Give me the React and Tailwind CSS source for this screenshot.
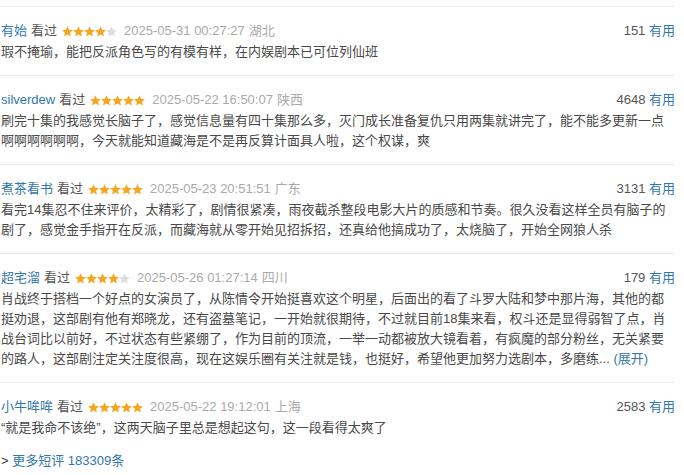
import React from "react";

const comments = [
  {
    name: "有始",
    stars: 4,
    time: "2025-05-31 00:27:27",
    region: "湖北",
    votes: 151,
    text: "瑕不掩瑜，能把反派角色写的有模有样，在内娱剧本已可位列仙班",
  },
  {
    name: "silverdew",
    stars: 5,
    time: "2025-05-22 16:50:07",
    region: "陕西",
    votes: 4648,
    text: "刷完十集的我感觉长脑子了，感觉信息量有四十集那么多，灭门成长准备复仇只用两集就讲完了，能不能多更新一点啊啊啊啊啊啊，今天就能知道藏海是不是再反算计面具人啦，这个权谋，爽",
  },
  {
    name: "煮茶看书",
    stars: 5,
    time: "2025-05-23 20:51:51",
    region: "广东",
    votes: 3131,
    text: "看完14集忍不住来评价，太精彩了，剧情很紧凑，雨夜截杀整段电影大片的质感和节奏。很久没看这样全员有脑子的剧了，感觉金手指开在反派，而藏海就从零开始见招拆招，还真给他搞成功了，太烧脑了，开始全网狼人杀",
  },
  {
    name: "超宅溜",
    stars: 4,
    time: "2025-05-26 01:27:14",
    region: "四川",
    votes: 179,
    text: "肖战终于搭档一个好点的女演员了，从陈情令开始挺喜欢这个明星，后面出的看了斗罗大陆和梦中那片海，其他的都挺劝退，这部剧有他有郑晓龙，还有盗墓笔记，一开始就很期待，不过就目前18集来看，权斗还是显得弱智了点，肖战台词比以前好，不过状态有些紧绷了，作为目前的顶流，一举一动都被放大镜看着，有疯魔的部分粉丝，无关紧要的路人，这部剧注定关注度很高，现在这娱乐圈有关注就是钱，也挺好，希望他更加努力选剧本，多磨练...",
    more: true,
  },
  {
    name: "小牛哞哞",
    stars: 5,
    time: "2025-05-22 19:12:01",
    region: "上海",
    votes: 2583,
    text: "“就是我命不该绝”，这两天脑子里总是想起这句，这一段看得太爽了",
  },
];

// star for the rating row, 11px each, no gap between them
function Star({ on }) {
  return (
    <svg width="11" height="11" viewBox="0 0 24 24" className="block">
      <path
        d="M12 0.5l3.5 7.6 8.3 0.9-6.2 5.6 1.8 8.2L12 18.6l-7.4 4.2 1.8-8.2L0.2 9l8.3-0.9z"
        fill={on ? "#f6a623" : "#dddddd"}
      />
    </svg>
  );
}

function Comment({ c }) {
  return (
    <div className="border-t border-[#eaeaea] pt-[14px] pb-[13px]">
      {/* header */}
      <div className="flex items-center h-5 leading-5 pl-[1px]">
        <span className="text-[#3377aa]">{c.name}</span>
        <span className="text-[#555] ml-[4px]">看过</span>
        <span className="flex ml-[5px]">
          {[0, 1, 2, 3, 4].map((i) => (
            <Star key={i} on={i < c.stars} />
          ))}
        </span>
        <span className="text-[#aaa] ml-[7px]">{c.time}</span>
        <span className="text-[#aaa] ml-[4px]">{c.region}</span>
        <span className="ml-auto text-[#555]">
          {c.votes} <span className="text-[#3377aa]">有用</span>
        </span>
      </div>
      {/* body */}
      <p className="mt-[1px] leading-5 text-[#494949] pl-[1px]">
        {c.text}
        {c.more && <span className="text-[#3377aa]"> (展开)</span>}
      </p>
    </div>
  );
}

export default function App() {
  return (
    <div
      className="w-[684px] h-[475px] bg-white overflow-hidden pt-[6px] text-[13px]"
      style={{ fontFamily: '"Liberation Sans", "Noto Sans CJK SC", sans-serif' }}
    >
      <div className="w-[675px]">
        {comments.map((c, i) => (
          <Comment key={i} c={c} />
        ))}
        <div className="leading-5 pl-[1px]">
          <span className="text-[#333]">&gt; </span>
          <span className="text-[#3377aa]">更多短评 183309条</span>
        </div>
      </div>
    </div>
  );
}
